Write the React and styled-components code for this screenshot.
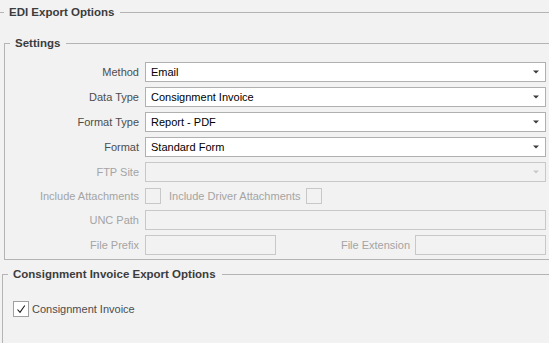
import React from "react";
import styled, { createGlobalStyle, css } from "styled-components";

const GlobalStyle = createGlobalStyle`
  html, body { margin: 0; padding: 0; background: #f2f2f2; }
  * { box-sizing: border-box; }
`;

const LINE = "#b4b4b4";

const Page = styled.div`
  width: 549px;
  height: 343px;
  overflow: hidden;
  background: #f2f2f2;
  font-family: "Liberation Sans", Arial, sans-serif;
  font-size: 11px;
  padding-top: 6px;
`;

const Group = styled.fieldset`
  margin: ${(p) => p.$margin || "0"};
  padding: ${(p) => p.$padding || "0"};
  min-width: 0;
  border: none;
  border-top: 1px solid ${LINE};
  ${(p) =>
    p.$boxed &&
    css`
      border-left: 1px solid ${LINE};
      border-bottom: 1px solid ${LINE};
    `}
  ${(p) => p.$fill && css`min-height: 120px;`}
`;

const Legend = styled.legend`
  padding: 0 6px 0 5px;
  font-weight: bold;
  font-size: 11.5px;
  line-height: 13px;
  color: #3c3c3c;
`;

const Form = styled.div`
  display: grid;
  grid-template-columns: 129px 1fr;
  grid-template-rows: repeat(5, 20px) 18px 20px 20px;
  column-gap: 6px;
  row-gap: 5px;
`;

const Label = styled.div`
  display: flex;
  align-items: center;
  justify-content: flex-end;
  white-space: nowrap;
  color: ${(p) => (p.$disabled ? "#a4a4a4" : "#4d4d4d")};
`;

const Select = styled.div`
  display: flex;
  align-items: center;
  height: 20px;
  padding: 0 6px 0 5px;
  border: 1px solid ${(p) => (p.$disabled ? "#c8c8c8" : "#b0b0b0")};
  background: ${(p) => (p.$disabled ? "#f2f2f2" : "#ffffff")};
  color: #000;
`;

const SelectText = styled.span`
  flex: 1;
  white-space: nowrap;
`;

const TextBox = styled.div`
  height: 20px;
  border: 1px solid #c8c8c8;
  background: #f2f2f2;
`;

const Box = styled.div`
  width: 16px;
  height: 16px;
  flex: none;
  border: 1px solid ${(p) => (p.$disabled ? "#c8c8c8" : "#a0a0a0")};
  background: ${(p) => (p.$disabled ? "#f2f2f2" : "#ffffff")};
  display: flex;
  align-items: center;
  justify-content: center;
`;

const CheckLine = styled.div`
  display: flex;
  align-items: center;
`;

const InlineLabel = styled.span`
  color: ${(p) => (p.$disabled ? "#a4a4a4" : "#4d4d4d")};
  margin: 0 ${(p) => p.$right || 0}px 0 ${(p) => p.$left || 0}px;
  white-space: nowrap;
`;

const PairRow = styled.div`
  display: grid;
  grid-template-columns: 131px 1fr 131px;
  column-gap: 5px;
`;

const OptionRow = styled.div`
  display: flex;
  align-items: center;
  padding: 20px 0 0 5px;
`;

const Arrow = ({ disabled }) => (
  <svg width="6" height="4" viewBox="0 0 6 4">
    <path d="M0 0.5 H6 L3 3.5 Z" fill={disabled ? "#c8c8c8" : "#3a3a3a"} />
  </svg>
);

const Check = () => (
  <svg width="12" height="12" viewBox="0 0 12 12">
    <path d="M2.5 6.5 L5 9.3 L9.8 2.5" fill="none" stroke="#1a1a1a" strokeWidth="1.1" />
  </svg>
);

const Dropdown = ({ value, disabled }) => (
  <Select $disabled={disabled}>
    <SelectText>{value}</SelectText>
    <Arrow disabled={disabled} />
  </Select>
);

export default function App() {
  return (
    <>
      <GlobalStyle />
      <Page>
        <Group $padding="18px 0 0 4px">
          <Legend>EDI Export Options</Legend>
          <Group $boxed $padding="12px 3px 4px 5px">
            <Legend>Settings</Legend>
            <Form>
              <Label>Method</Label>
              <Dropdown value="Email" />
              <Label>Data Type</Label>
              <Dropdown value="Consignment Invoice" />
              <Label>Format Type</Label>
              <Dropdown value="Report - PDF" />
              <Label>Format</Label>
              <Dropdown value="Standard Form" />
              <Label $disabled>FTP Site</Label>
              <Dropdown value="" disabled />
              <Label $disabled>Include Attachments</Label>
              <CheckLine>
                <Box $disabled />
                <InlineLabel $disabled $left={8} $right={6}>
                  Include Driver Attachments
                </InlineLabel>
                <Box $disabled />
              </CheckLine>
              <Label $disabled>UNC Path</Label>
              <TextBox />
              <Label $disabled>File Prefix</Label>
              <PairRow>
                <TextBox />
                <Label $disabled>File Extension</Label>
                <TextBox />
              </PairRow>
            </Form>
          </Group>
          <Group $boxed $fill $margin="8px 0 0 -2px" $padding="0 0 0 5px">
            <Legend>Consignment Invoice Export Options</Legend>
            <OptionRow>
              <Box>
                <Check />
              </Box>
              <InlineLabel $left={3}>Consignment Invoice</InlineLabel>
            </OptionRow>
          </Group>
        </Group>
      </Page>
    </>
  );
}
